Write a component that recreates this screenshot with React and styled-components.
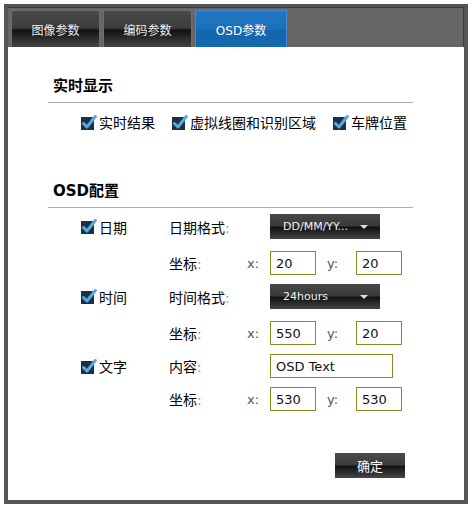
import styled, { createGlobalStyle } from 'styled-components';

const GlobalStyle = createGlobalStyle`
  body {
    margin: 0;
    background: #fff;
    font-family: "DejaVu Sans", "Noto Sans CJK SC", sans-serif;
  }
`;

const Frame = styled.div`
  margin: 4px 0 0 4px;
  width: 464px;
  height: 500px;
  box-sizing: border-box;
  border: 4px solid #555;
  border-top-width: 3px;
  display: flex;
  flex-direction: column;
`;

const TabBar = styled.div`
  height: 40px;
  box-sizing: border-box;
  background: #666;
  border-top: 1px solid #3c3c3c;
  border-right: 1px solid #3c3c3c;
  padding: 2px 0 0 3px;
  display: flex;
  gap: 3px;
`;

const Tab = styled.div`
  width: ${p => (p.$active ? 92 : 89)}px;
  height: 38px;
  box-sizing: border-box;
  display: flex;
  align-items: center;
  justify-content: center;
  font-size: 12px;
  color: ${p => (p.$active ? '#fff' : '#eee')};
  border: 1px solid ${p => (p.$active ? '#4a86d6' : '#6e6e6e')};
  border-bottom: none;
  background: ${p =>
    p.$active
      ? 'linear-gradient(to bottom, #2077c2 0%, #1b70bb 48%, #1565ad 54%, #126aaf 100%)'
      : 'linear-gradient(to bottom, #4a4a4a 0%, #3c3c3c 46%, #111 52%, #2a2a2a 72%, #474747 100%)'};
`;

const Body = styled.div`
  flex: 1;
  padding: 29px 0 0 40px;
  background: #fff;
  display: flex;
  flex-direction: column;
`;

const Section = styled.div`
  width: 365px;
  margin-top: ${p => p.$top || 0}px;
`;

const Title = styled.div`
  font-size: 15px;
  font-weight: bold;
  line-height: 20px;
  color: #000;
  padding: 0 0 6px 5px;
  border-bottom: 1px solid #aaa;
`;

const CheckRow = styled.div`
  display: flex;
  gap: 17px;
  padding: 9px 0 0 33px;
`;

const CheckItem = styled.label`
  display: flex;
  align-items: center;
  gap: 2px;
  height: 20px;
  font-size: 14px;
  color: #000;
`;

const FieldRow = styled.div`
  display: grid;
  grid-template-columns: 88px 78px 23px 46px 40px 46px;
  align-items: center;
  height: ${p => p.$h || 24}px;
  margin-top: ${p => p.$top || 0}px;
  margin-left: 33px;
  font-size: 14px;
`;

const Label = styled.span`
  color: #000;
  grid-column: ${p => p.$span || 'auto'};
`;

const Colon = styled.span`
  color: #999;
`;

const Axis = styled.span`
  color: #555;
  font-size: 13px;
  padding-left: ${p => p.$pad || 0}px;
`;

const Input = styled.div`
  box-sizing: border-box;
  height: 24px;
  width: ${p => p.$w || 46}px;
  border: 1px solid #8a8a22;
  padding-left: 5px;
  display: flex;
  align-items: center;
  font-size: 13px;
  color: #111;
  grid-column: ${p => p.$span || 'auto'};
`;

const Select = styled.div`
  grid-column: 4 / 7;
  width: 110px;
  height: 25px;
  box-sizing: border-box;
  padding: 0 12px 0 13px;
  display: flex;
  align-items: center;
  justify-content: space-between;
  font-size: 11px;
  color: #f2f2f2;
  background: linear-gradient(to bottom, #474747 0%, #3a3a3a 46%, #121212 54%, #2a2a2a 75%, #444 100%);
`;

const Caret = styled.span`
  width: 0;
  height: 0;
  border-left: 4px solid transparent;
  border-right: 4px solid transparent;
  border-top: 4px solid #ddd;
`;

const Footer = styled.div`
  display: flex;
  justify-content: flex-end;
  width: 365px;
  margin-top: 42px;
`;

const Button = styled.button`
  width: 70px;
  height: 25px;
  margin-right: 8px;
  padding: 0;
  border: none;
  color: #fff;
  font-family: inherit;
  font-size: 13px;
  background: linear-gradient(to bottom, #4a4a4a 0%, #3d3d3d 46%, #141414 54%, #2b2b2b 75%, #474747 100%);
`;

function Check() {
  return (
    <svg width="16" height="15" viewBox="0 0 16 15">
      <rect x="0" y="2" width="13" height="13" fill="#1d3044" />
      <path d="M2.5 8.5 L6 12 L14.3 1.5" fill="none" stroke="#55aae4" strokeWidth="3" strokeLinecap="round" strokeLinejoin="round" />
    </svg>
  );
}

function Coord({ x, y, top }) {
  return (
    <FieldRow $top={top}>
      <span />
      <Label>坐标<Colon>:</Colon></Label>
      <Axis>x:</Axis>
      <Input>{x}</Input>
      <Axis $pad={11}>y:</Axis>
      <Input>{y}</Input>
    </FieldRow>
  );
}

export default function App() {
  return (
    <>
      <GlobalStyle />
      <Frame>
        <TabBar>
          <Tab>图像参数</Tab>
          <Tab>编码参数</Tab>
          <Tab $active>OSD参数</Tab>
        </TabBar>
        <Body>
          <Section>
            <Title>实时显示</Title>
            <CheckRow>
              <CheckItem><Check />实时结果</CheckItem>
              <CheckItem><Check />虚拟线圈和识别区域</CheckItem>
              <CheckItem><Check />车牌位置</CheckItem>
            </CheckRow>
          </Section>
          <Section $top={49}>
            <Title>OSD配置</Title>
            <FieldRow $h={25} $top={6}>
              <CheckItem><Check />日期</CheckItem>
              <Label $span="2 / 4">日期格式<Colon>:</Colon></Label>
              <Select>DD/MM/YY...<Caret /></Select>
            </FieldRow>
            <Coord x="20" y="20" top={12} />
            <FieldRow $h={25} $top={9}>
              <CheckItem><Check />时间</CheckItem>
              <Label $span="2 / 4">时间格式<Colon>:</Colon></Label>
              <Select>24hours<Caret /></Select>
            </FieldRow>
            <Coord x="550" y="20" top={12} />
            <FieldRow $top={9}>
              <CheckItem><Check />文字</CheckItem>
              <Label $span="2 / 4">内容<Colon>:</Colon></Label>
              <Input $w={123} $span="4 / 7">OSD Text</Input>
            </FieldRow>
            <Coord x="530" y="530" top={9} />
          </Section>
          <Footer>
            <Button>确定</Button>
          </Footer>
        </Body>
      </Frame>
    </>
  );
}
